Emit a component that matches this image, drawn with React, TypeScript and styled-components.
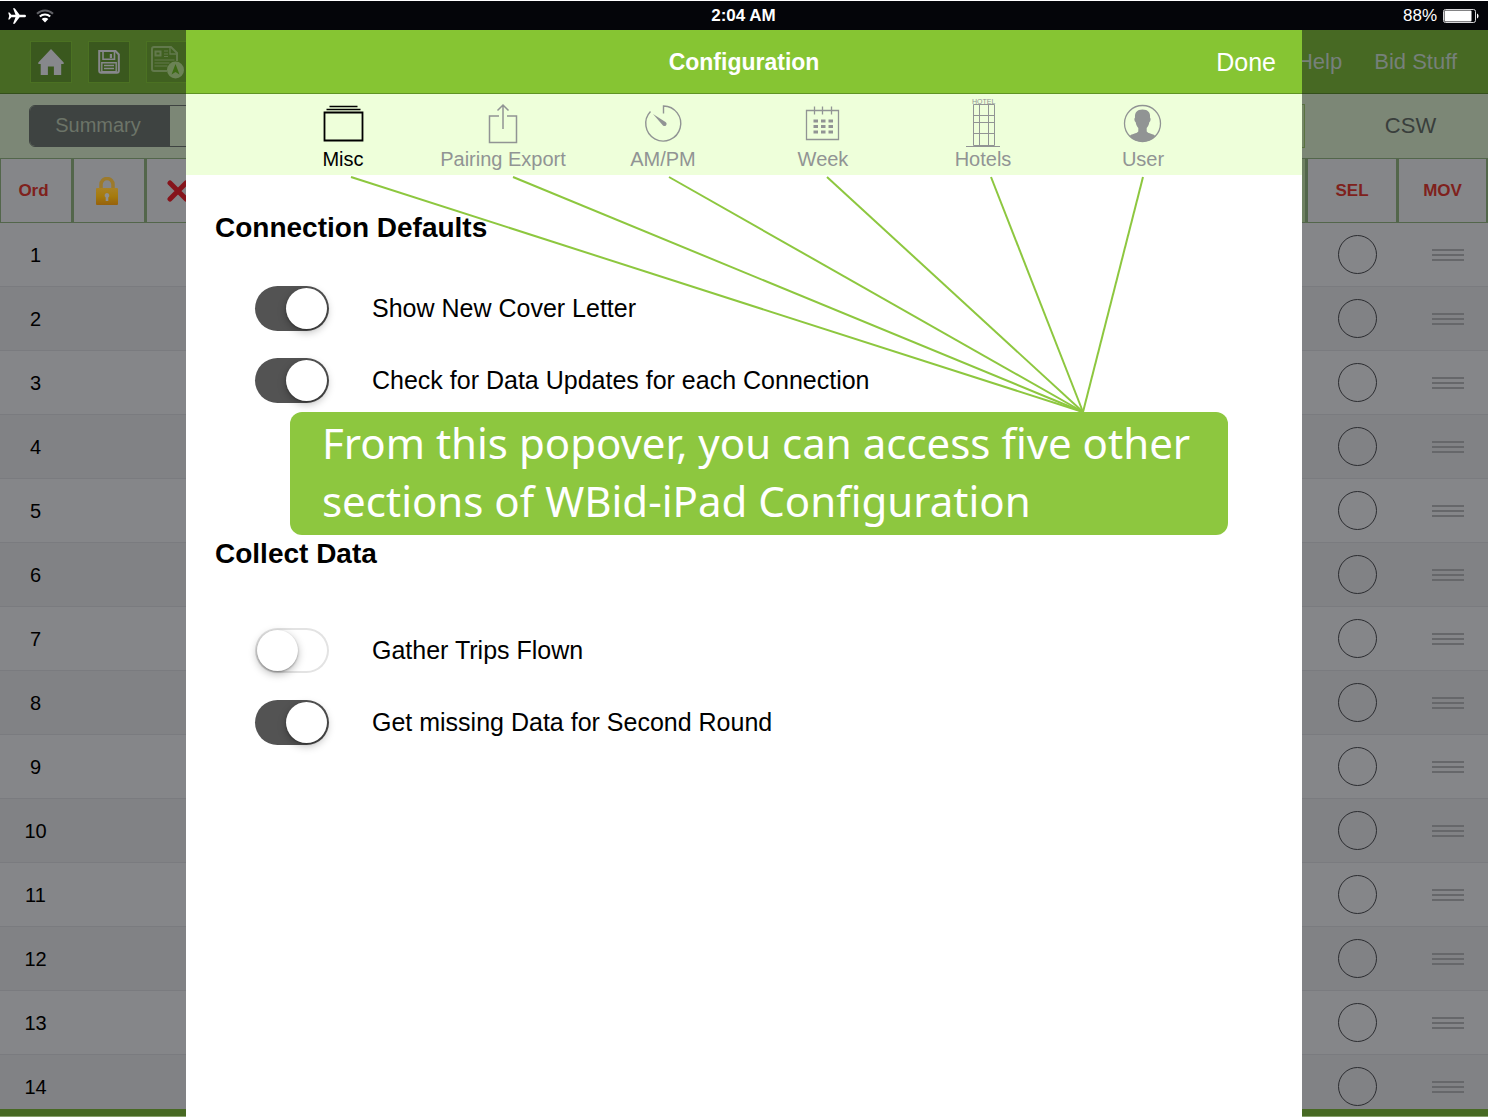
import React, { useState } from "react";
import styled, { createGlobalStyle } from "styled-components";

const GlobalStyle = createGlobalStyle`
  *, *::before, *::after { box-sizing: border-box; }
  body { margin: 0; background: #fff; }
  button { font: inherit; color: inherit; background: none; border: 0; padding: 0; cursor: pointer; }
`;

const Screen = styled.div`
  display: flex;
  flex-direction: column;
  height: 100vh;
  overflow: hidden;
  font-family: "Liberation Sans", Arial, sans-serif;
  color: #000;
`;

const StatusBar = styled.header`
  display: grid;
  grid-template-columns: 1fr auto 1fr;
  align-items: center;
  flex: none;
  height: 30px;
  padding: 0 9px 0 8px;
  border-top: 1px solid #fff;
  background: #040509;
  color: #fff;
  font-size: 17px;
`;

const StatusGroup = styled.div<{ $end?: boolean }>`
  display: flex;
  align-items: center;
  justify-content: ${(p) => (p.$end ? "flex-end" : "flex-start")};
  gap: ${(p) => (p.$end ? 6 : 10)}px;
`;

const Clock = styled.time`
  font-weight: 700;
`;

const Stage = styled.div`
  position: relative;
  display: flex;
  flex-direction: column;
  flex: 1;
  min-height: 0;
`;

const Toolbar = styled.nav`
  display: flex;
  align-items: center;
  justify-content: space-between;
  flex: none;
  height: 64px;
  padding: 0 31px 0 30px;
  background: #476923;
  border-bottom: 1px solid #34501b;
`;

const ToolGroup = styled.div<{ $gap: number }>`
  display: flex;
  align-items: center;
  gap: ${(p) => p.$gap}px;
`;

const ToolButton = styled.button<{ $dim?: boolean }>`
  display: grid;
  place-items: center;
  width: 42px;
  height: 42px;
  background: ${(p) => (p.$dim ? "#406020" : "#3a581e")};
  border: 1px solid #4b7122;
`;

const ToolLink = styled.button`
  color: #76807a;
  font-size: 22px;
`;

const ViewBar = styled.div`
  display: flex;
  align-items: center;
  flex: none;
  height: 64px;
  padding-left: 29px;
  background: #7c8776;
`;

const Segments = styled.div`
  display: flex;
  width: 420px;
  height: 42px;
  border: 1px solid #3e4341;
  border-radius: 6px;
  overflow: hidden;
`;

const Segment = styled.button<{ $active?: boolean }>`
  width: 140px;
  padding: 0 4px 2px 0;
  background: ${(p) => (p.$active ? "#3e4341" : "transparent")};
  color: ${(p) => (p.$active ? "#6c7468" : "#3e4341")};
  font-size: 20px;
`;

const FilterBox = styled.div`
  width: 160px;
  height: 44px;
  margin: 0 28px 0 auto;
  border: 1px solid #5a7342;
  background: #748765;
`;

const CswButton = styled.button`
  width: 155px;
  color: #393e3c;
  font-size: 22px;
`;

const TableWrap = styled.main`
  flex: 1;
  min-height: 0;
  overflow: hidden;
  background: #858689;
`;

const Table = styled.table`
  width: 100%;
  table-layout: fixed;
  border-collapse: separate;
  border-spacing: 0;
  font-size: 20px;
`;

const Col = styled.col<{ $w?: number }>`
  width: ${(p) => (p.$w ? `${p.$w}px` : "auto")};
`;

const HeadCell = styled.th<{ $blank?: boolean; $lead?: boolean }>`
  height: 65px;
  padding: ${(p) => (p.$lead ? "0 5px 0 0" : "0")};
  background: ${(p) => (p.$blank ? "#6e8162" : "#858689")};
  border: 1px solid #53664b;
  border-right-width: 2px;
  color: #7f211c;
  font-size: 17px;
  text-align: center;

  svg { display: block; margin: 0 auto; }
`;

const Row = styled.tr`
  background: #858689;
  &:nth-child(even) { background: #818285; }
`;

const Cell = styled.td`
  height: 64px;
  padding: 2px 2px 0 0;
  border-bottom: 1px solid #7a7b7f;
  text-align: center;
`;

const ControlCell = styled(Cell)`
  padding: 0 0 0 10px;
`;

const RowCheck = styled.input`
  display: block;
  appearance: none;
  width: 39px;
  height: 39px;
  margin: 0 auto;
  border: 1px solid #2b2c30;
  border-radius: 50%;
  &:checked { background: #2b2c30; }
`;

const Handle = styled.button`
  display: flex;
  flex-direction: column;
  gap: 3px;
  width: 32px;
  margin: 0 auto;
`;

const HandleBar = styled.span`
  height: 2px;
  background: #66676a;
`;

const BottomBar = styled.footer`
  flex: none;
  height: 8px;
  background: #476923;
  border-bottom: 1px solid #87a06b;
`;

const Overlay = styled.div`
  position: absolute;
  inset: 0;
  display: flex;
  justify-content: center;
`;

const Popover = styled.section`
  position: relative;
  width: 75%;
  background: #fff;
`;

const PopoverHeader = styled.header`
  display: grid;
  grid-template-columns: 1fr auto 1fr;
  align-items: center;
  height: 64px;
  padding: 2px 26px 0;
  background: #86c533;
  border-bottom: 1px solid #5f9424;
  color: #fff;
`;

const PopoverTitle = styled.h1`
  grid-column: 2;
  margin: 0;
  font-size: 23px;
`;

const DoneButton = styled.button`
  justify-self: end;
  font-size: 25px;
`;

const Tabs = styled.div`
  display: flex;
  justify-content: center;
  height: 81px;
  padding: 4px 2px 0 0;
  background: #eeffda;
`;

const Tab = styled.button<{ $active: boolean }>`
  display: flex;
  flex-direction: column;
  align-items: center;
  flex: 0 1 160px;
  color: ${(p) => (p.$active ? "#000" : "#919494")};
  font-size: 20px;
  line-height: 22px;
  white-space: nowrap;
`;

const Settings = styled.div`
  padding: 37px 29px;
`;

const Section = styled.section<{ $gap: number }>`
  display: flex;
  flex-direction: column;
  gap: ${(p) => p.$gap}px;
  & + & { margin-top: 122px; }
`;

const SectionTitle = styled.h2`
  margin: 0;
  font-size: 28px;
  line-height: 32px;
`;

const SettingRow = styled.label`
  display: flex;
  align-items: center;
  gap: 43px;
  height: 72px;
  padding-left: 40px;
  font-size: 25px;
`;

const SettingList = styled.div`
  display: flex;
  flex-direction: column;
`;

const Switch = styled.input`
  appearance: none;
  display: flex;
  align-items: center;
  flex: none;
  width: 74px;
  height: 45px;
  margin: 0;
  padding: 0 2px;
  border-radius: 23px;
  background: #fff;
  box-shadow: inset 0 0 0 2px #e3e3e3;

  &::before {
    content: "";
    width: 41px;
    height: 41px;
    border-radius: 50%;
    background: #fff;
    box-shadow: 0 3px 8px rgba(0, 0, 0, 0.28), 0 1px 2px rgba(0, 0, 0, 0.3);
  }

  &:checked {
    justify-content: flex-end;
    background: #535353;
    box-shadow: none;
  }
`;

const Pointers = styled.svg`
  position: absolute;
  left: 0;
  top: 146px;
  pointer-events: none;
`;

const Callout = styled.p`
  position: absolute;
  left: 104px;
  right: 74px;
  top: 382px;
  margin: 0;
  padding: 2px 0 5px 32px;
  border-radius: 12px;
  background: #8dc73f;
  color: #fff;
  font-family: "Noto Sans", "Open Sans", sans-serif;
  font-size: 42px;
  line-height: 58px;
`;

const PlaneIcon = () => (
  <svg width="18" height="16" viewBox="0 0 18 16" fill="#fff" aria-hidden="true">
    <path d="M18 8c0-.9-.7-1.200-1.800-1.200h-4.600L6.700.2H5l2.500 6.600H3.300L1.500 4.500H.2L1.200 8 .2 11.500h1.300l1.800-2.300h4.200L5 15.800h1.700l4.900-6.600h4.600C17.300 9.200 18 8.900 18 8z" />
  </svg>
);

const WifiIcon = () => (
  <svg width="18" height="14" viewBox="0 0 18 14" fill="none" strokeWidth="2.100" aria-hidden="true">
    <path d="M1 4.800a11.500 11.500 0 0 1 16 0" stroke="#606166" />
    <path d="M3.800 7.600a7.500 7.500 0 0 1 10.400 0" stroke="#fff" />
    <path d="M9 13.500l3.300-3.400a4.700 4.700 0 0 0-6.600 0z" fill="#fff" />
  </svg>
);

const BatteryIcon = () => (
  <svg width="36" height="14" viewBox="0 0 36 14" aria-hidden="true">
    <rect x=".5" y=".5" width="32" height="13" rx="2" fill="none" stroke="#d8d8da" />
    <rect x="1.500" y="1.500" width="27" height="11" rx="1" fill="#fff" />
    <path d="M34 4.500c2 .8 2 4.200 0 5z" fill="#fff" />
  </svg>
);

const HomeIcon = () => (
  <svg width="26" height="26" viewBox="0 0 26 26" fill="#87888c" aria-hidden="true">
    <path d="M13 0L.3 13.500V15h2.400v11h7.200v-8.500h6V26h7.300V15h2.500v-1.500z" />
  </svg>
);

const SaveIcon = () => (
  <svg width="22" height="24" viewBox="0 0 22 24" fill="none" stroke="#87888c" aria-hidden="true">
    <path d="M1.200 1h16.300l3.300 3.500v16.300a2 2 0 0 1-2 2H3.200a2 2 0 0 1-2-2z" strokeWidth="2" />
    <path d="M5 1.500v7.700h11.500V1.500" strokeWidth="1.600" />
    <path d="M11.800 4h2.200v4h-2.200z" fill="#87888c" stroke="none" />
    <path d="M3.800 12.700h14.400v9H3.800zM6 15.500h10M6 18.500h10" strokeWidth="1.400" />
  </svg>
);

const ReportIcon = () => (
  <svg width="34" height="34" viewBox="0 0 34 34" fill="none" stroke="#62794c" aria-hidden="true">
    <path d="M2 4a2 2 0 0 1 2-2h17l6 6v8M2 4v20a2 2 0 0 0 2 2h13" strokeWidth="2" />
    <path d="M20 3v6h6" strokeWidth="1.300" />
    <path d="M5.500 6.500h5v4h-5z" strokeWidth="2" />
    <path d="M14 6h4M14 9h4M14 11.500h4M4.500 15h20M4.500 18h15M4.500 21h13" strokeWidth="1.200" />
    <circle cx="25.500" cy="25" r="8.500" fill="#6b8255" stroke="none" />
    <path d="M25.500 19l-4 10.500 4-2.500 4 2.500z" fill="#3d6a14" stroke="none" />
  </svg>
);

const LockIcon = () => (
  <svg width="22" height="28" viewBox="0 0 22 28" aria-hidden="true">
    <defs>
      <linearGradient id="brass" x1="0" y1="0" x2="0" y2="1">
        <stop offset="0" stopColor="#a98225" />
        <stop offset=".5" stopColor="#a57a0c" />
        <stop offset="1" stopColor="#96610c" />
      </linearGradient>
    </defs>
    <path d="M5 12V7.500a6 6 0 0 1 12 0V12" fill="none" stroke="#9c7a2c" strokeWidth="3.500" />
    <rect x="0" y="11" width="22" height="17" rx="1" fill="url(#brass)" />
    <path d="M11 16a2.400 2.400 0 0 1 1.300 4.400V24H9.700v-3.600A2.400 2.400 0 0 1 11 16z" fill="#8e8f90" />
  </svg>
);

const CrossIcon = () => (
  <svg width="22" height="22" viewBox="0 0 22 22" fill="none" stroke="#86141b" strokeWidth="5" strokeLinecap="round" aria-hidden="true">
    <path d="M3 3l16 16M19 3L3 19" />
  </svg>
);

const MiscIcon = () => (
  <svg width="42" height="50" viewBox="0 0 42 50" fill="none" stroke="currentColor" aria-hidden="true">
    <path d="M7.500 8.500h28M4.500 11.500h34" strokeWidth="1.400" />
    <path d="M2.500 14.500h38v28h-38z" strokeWidth="1.800" />
  </svg>
);

const ExportIcon = () => (
  <svg width="42" height="50" viewBox="0 0 42 50" fill="none" stroke="currentColor" strokeWidth="1.500" aria-hidden="true">
    <path d="M17 18H7.500v26.500h27V18H25M21 31V7M15.500 12.500L21 7l5.500 5.500" />
  </svg>
);

const GaugeIcon = () => (
  <svg width="42" height="50" viewBox="0 0 42 50" fill="none" stroke="currentColor" strokeWidth="1.400" aria-hidden="true">
    <path d="M21.500 15.500V8A17.500 17.500 0 1 1 8.500 13.500" />
    <path d="M11 16l12.500 8a2.200 2.200 0 1 1-3 3z" fill="currentColor" stroke="none" />
  </svg>
);

const WeekIcon = () => (
  <svg width="42" height="50" viewBox="0 0 42 50" fill="none" stroke="currentColor" strokeWidth="1.300" aria-hidden="true">
    <path d="M4.500 12.500h32v29h-32zM12.500 8.500v8M20.500 8.500v8M29.500 8.500v8" />
    <path d="M11.500 23H31M11.500 28.500H31M11.500 34H31" strokeWidth="3.200" strokeDasharray="4.500 3" />
  </svg>
);

const HotelMark = styled.text`
  font-size: 7px;
  font-family: "Liberation Sans", Arial, sans-serif;
`;

const HotelsIcon = () => (
  <svg width="42" height="50" viewBox="0 0 42 50" fill="none" stroke="currentColor" aria-hidden="true">
    <HotelMark x="10" y="6" fill="currentColor" stroke="none">HOTEL</HotelMark>
    <path d="M11.500 6.500h21v41h-21zM17.500 6.500v41M26.500 6.500v41M11.500 17.500h21M11.500 24.500h21M11.500 35.500h21M4 48.500h34" />
  </svg>
);

const UserIcon = () => (
  <svg width="42" height="50" viewBox="0 0 42 50" fill="none" stroke="currentColor" aria-hidden="true">
    <circle cx="20.500" cy="25.500" r="18" strokeWidth="1.300" />
    <path d="M20.500 11.500c5.500 0 8 3 7.500 8 1 1 .8 3.500-.7 4.800-.4 3-1.600 4.700-2.600 5.700v3.500c2 2.500 6.500 2 8.700 4.500-3 3.700-8 5.500-12.900 5.500S10.600 41.700 7.600 38c2.200-2.500 6.700-2 8.700-4.500V30c-1-1-2.200-2.700-2.600-5.700-1.500-1.300-1.700-3.800-.7-4.800-.5-5 2-8 7.500-8z" fill="currentColor" stroke="none" />
  </svg>
);

const tabs = [
  { name: "Misc", Icon: MiscIcon },
  { name: "Pairing Export", Icon: ExportIcon },
  { name: "AM/PM", Icon: GaugeIcon },
  { name: "Week", Icon: WeekIcon },
  { name: "Hotels", Icon: HotelsIcon },
  { name: "User", Icon: UserIcon },
];

const sections = [
  {
    title: "Connection Defaults",
    gap: 28,
    items: [
      { label: "Show New Cover Letter", on: true },
      { label: "Check for Data Updates for each Connection", on: true },
    ],
  },
  {
    title: "Collect Data",
    gap: 44,
    items: [
      { label: "Gather Trips Flown", on: false },
      { label: "Get missing Data for Second Round", on: true },
    ],
  },
];

const pointerStarts = [165, 327, 483, 641, 805, 957];
const lines = Array.from({ length: 14 }, (_, i) => i + 1);

export default function App() {
  const [tab, setTab] = useState("Misc");

  return (
    <Screen>
      <GlobalStyle />
      <StatusBar>
        <StatusGroup>
          <PlaneIcon />
          <WifiIcon />
        </StatusGroup>
        <Clock>2:04 AM</Clock>
        <StatusGroup $end>
          <span>88%</span>
          <BatteryIcon />
        </StatusGroup>
      </StatusBar>
      <Stage>
        <Toolbar>
          <ToolGroup $gap={16}>
            <ToolButton aria-label="Home"><HomeIcon /></ToolButton>
            <ToolButton aria-label="Save"><SaveIcon /></ToolButton>
            <ToolButton aria-label="Report" $dim><ReportIcon /></ToolButton>
          </ToolGroup>
          <ToolGroup $gap={32}>
            <ToolLink>Help</ToolLink>
            <ToolLink>Bid Stuff</ToolLink>
          </ToolGroup>
        </Toolbar>
        <ViewBar>
          <Segments>
            <Segment $active>Summary</Segment>
          </Segments>
          <FilterBox />
          <CswButton>CSW</CswButton>
        </ViewBar>
        <TableWrap>
          <Table>
            <colgroup>
              <Col $w={73} />
              <Col $w={73} />
              <Col $w={65} />
              <Col />
              <Col $w={91} />
              <Col $w={90} />
            </colgroup>
            <thead>
              <tr>
                <HeadCell $lead>Ord</HeadCell>
                <HeadCell $lead aria-label="Lock"><LockIcon /></HeadCell>
                <HeadCell aria-label="Remove"><CrossIcon /></HeadCell>
                <HeadCell $blank />
                <HeadCell>SEL</HeadCell>
                <HeadCell>MOV</HeadCell>
              </tr>
            </thead>
            <tbody>
              {lines.map((n) => (
                <Row key={n}>
                  <Cell>{n}</Cell>
                  <Cell />
                  <Cell />
                  <Cell />
                  <ControlCell>
                    <RowCheck type="checkbox" aria-label={`Select line ${n}`} />
                  </ControlCell>
                  <ControlCell>
                    <Handle aria-label={`Move line ${n}`}>
                      <HandleBar />
                      <HandleBar />
                      <HandleBar />
                    </Handle>
                  </ControlCell>
                </Row>
              ))}
            </tbody>
          </Table>
        </TableWrap>
        <BottomBar />
        <Overlay>
          <Popover role="dialog" aria-labelledby="popover-title">
            <PopoverHeader>
              <PopoverTitle id="popover-title">Configuration</PopoverTitle>
              <DoneButton>Done</DoneButton>
            </PopoverHeader>
            <Tabs role="tablist">
              {tabs.map(({ name, Icon }) => (
                <Tab key={name} role="tab" aria-selected={tab === name} $active={tab === name} onClick={() => setTab(name)}>
                  <Icon />
                  {name}
                </Tab>
              ))}
            </Tabs>
            <Settings>
              {sections.map((s) => (
                <Section key={s.title} $gap={s.gap}>
                  <SectionTitle>{s.title}</SectionTitle>
                  <SettingList>
                    {s.items.map((item) => (
                      <SettingRow key={item.label}>
                        <Switch type="checkbox" role="switch" defaultChecked={item.on} />
                        {item.label}
                      </SettingRow>
                    ))}
                  </SettingList>
                </Section>
              ))}
            </Settings>
            <Pointers width="1116" height="237" viewBox="0 0 1116 237" stroke="#8dc73f" strokeWidth="2" aria-hidden="true">
              {pointerStarts.map((x) => (
                <line key={x} x1={x} y1="1" x2="897" y2="236" />
              ))}
            </Pointers>
            <Callout>
              From this popover, you can access five other
              <br />
              sections of WBid-iPad Configuration
            </Callout>
          </Popover>
        </Overlay>
      </Stage>
    </Screen>
  );
}
